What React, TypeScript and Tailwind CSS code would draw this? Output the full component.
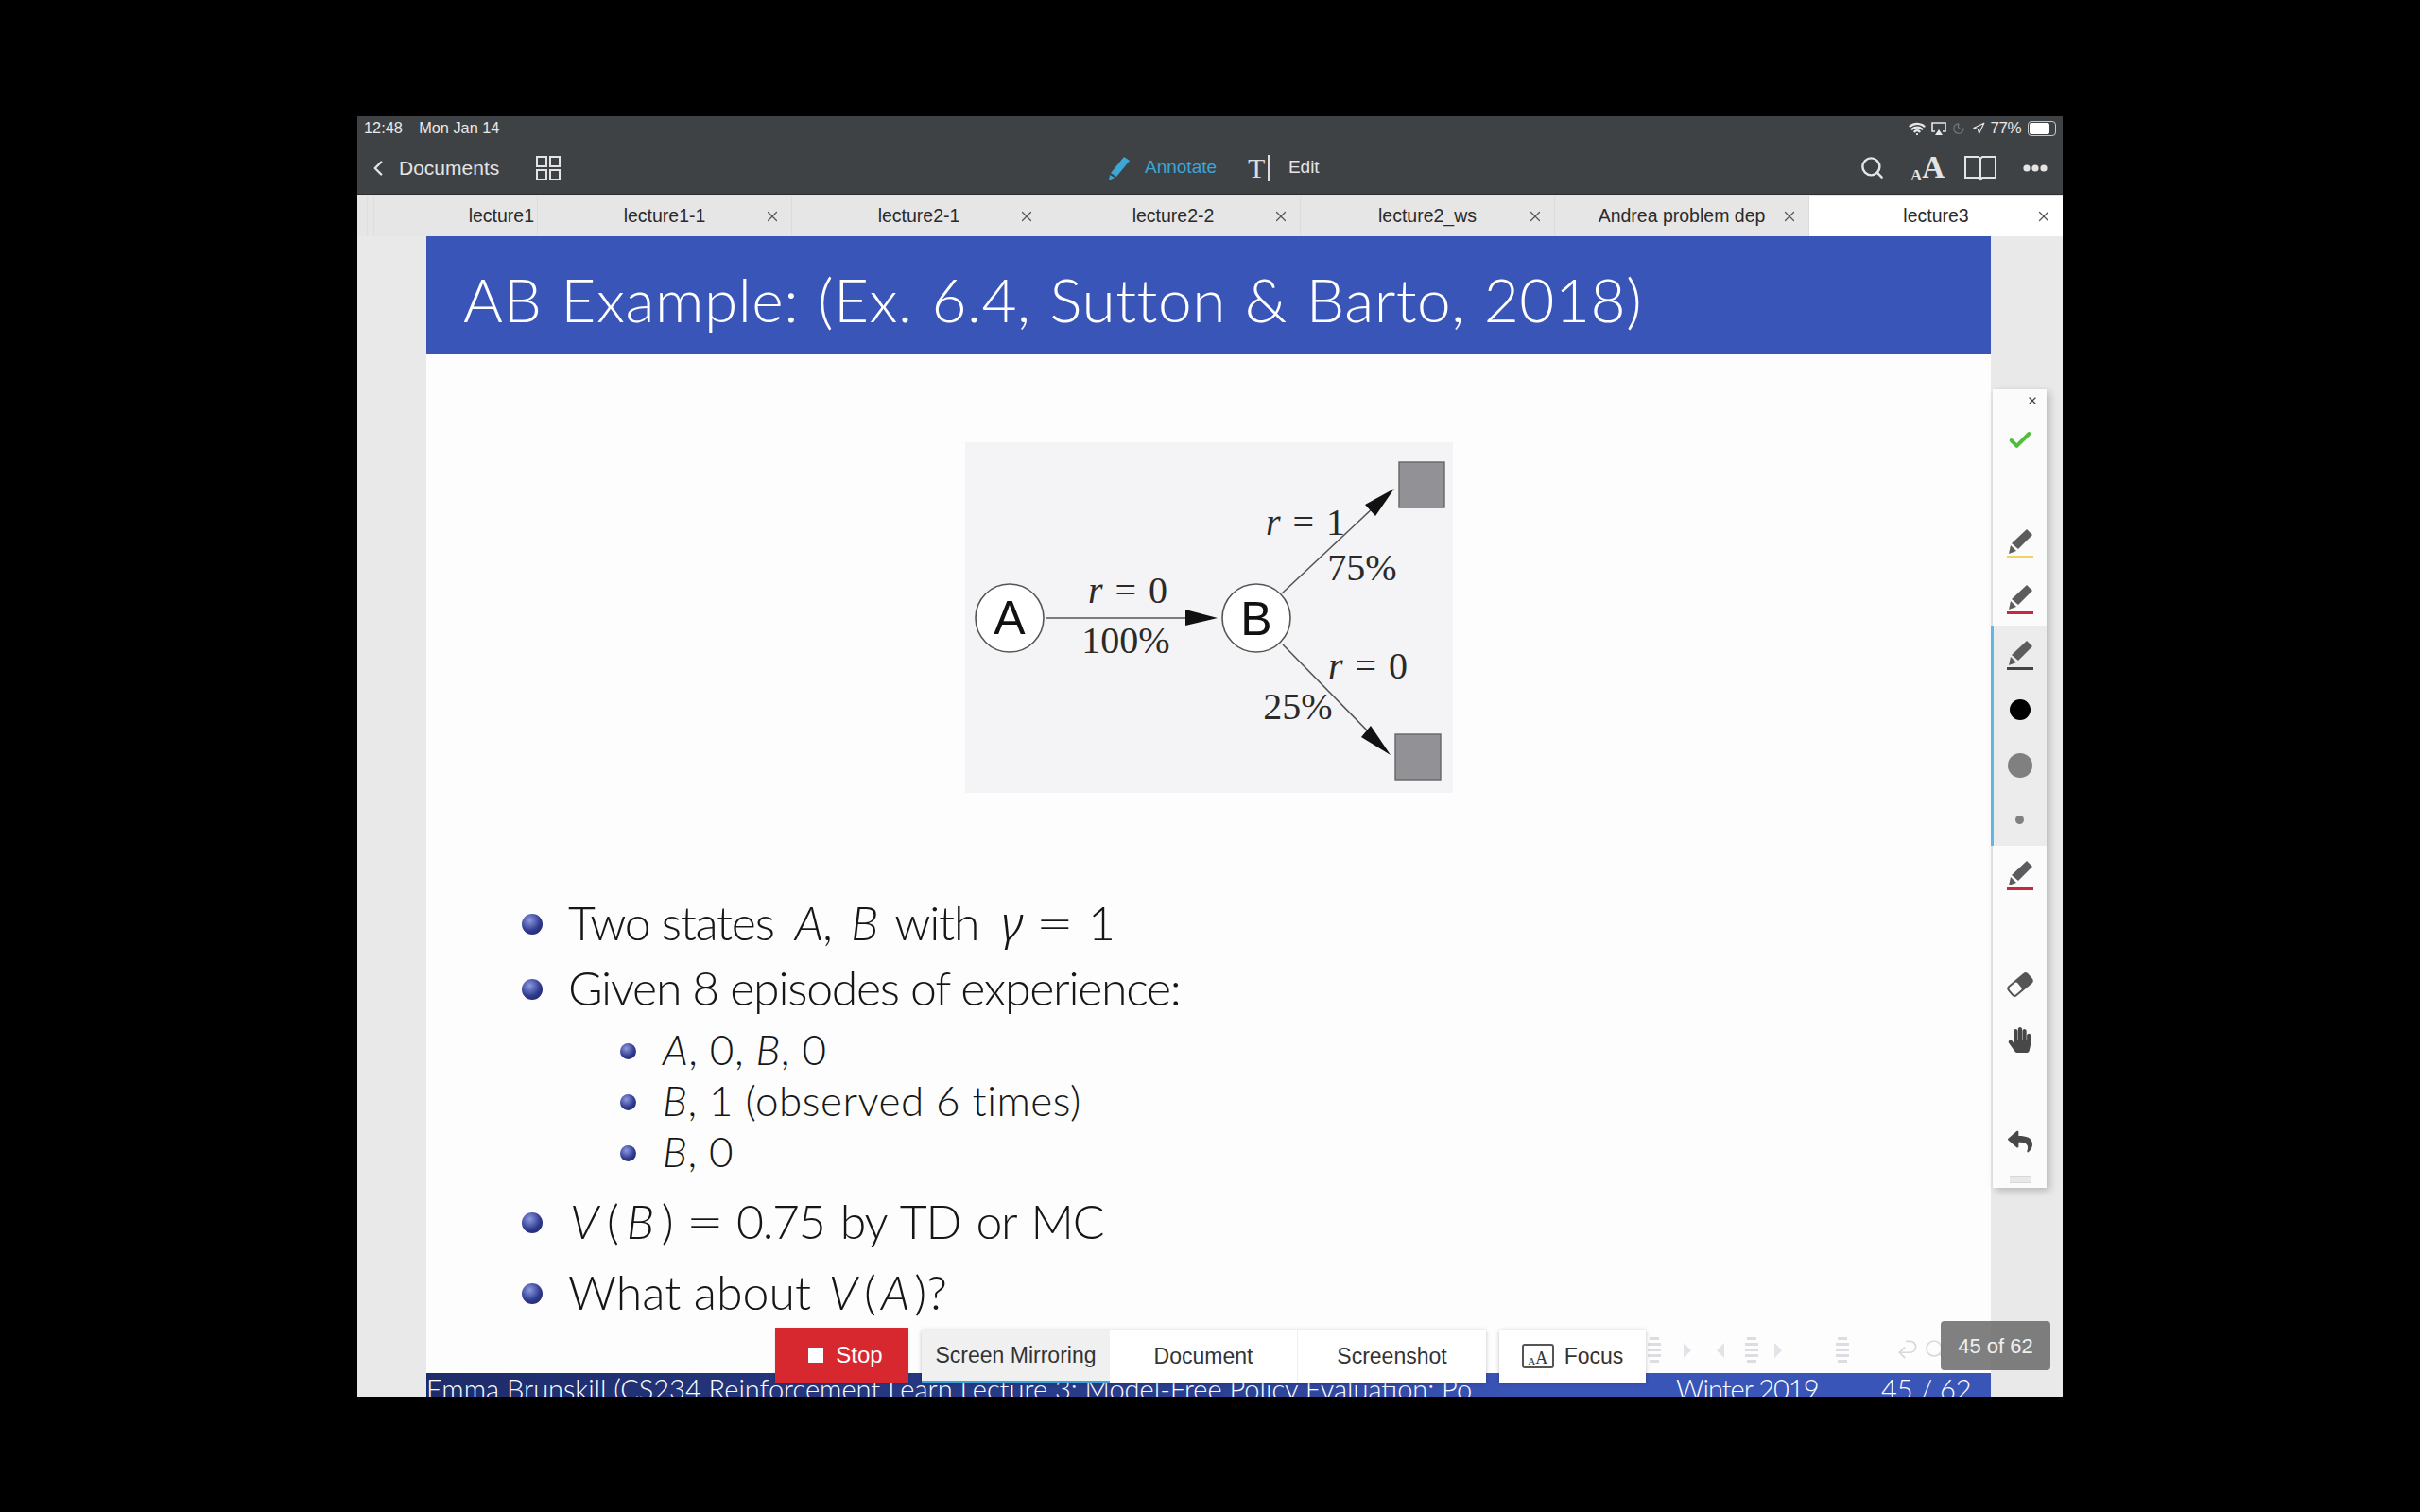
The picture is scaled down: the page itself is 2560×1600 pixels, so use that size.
import React from 'react';
import { ChevronLeft, Search, Check, X, Navigation, Moon, Wifi, Undo2 } from 'lucide-react';
import { FaHandPaper, FaReply } from 'react-icons/fa';

const tabs = ['lecture1-1', 'lecture2-1', 'lecture2-2', 'lecture2_ws', 'Andrea problem dep'];

const PenIcon = ({ line }: { line: string }) => (
  <svg width="30" height="32" viewBox="0 0 30 32">
    <path d="M22 0l6 6L13 21l-7-6z" fill="#5c5c5e" />
    <path d="M5 17l6 6-8 3z" fill="#5c5c5e" />
    <rect x="1" y="28" width="28" height="3" fill={line} />
  </svg>
);

const Ball = ({ small }: { small?: boolean }) => (
  <span
    className={`shrink-0 rounded-full bg-[radial-gradient(circle_at_38%_32%,#8d9ae0,#2f3a8e_55%,#181f5c)] ${
      small ? 'w-[17px] h-[17px] mt-[4px]' : 'w-[22px] h-[22px] mt-[3px]'
    }`}
  />
);

const NavMark = ({ x }: { x: string }) => (
  <svg width="14" height="32" viewBox="0 0 14 32" className={`absolute top-[1415px] ${x}`}>
    <g fill="#dcdce2">
      <rect x="2" y="0" width="10" height="3" />
      <rect x="0" y="6" width="14" height="3" />
      <rect x="0" y="12" width="14" height="3" />
      <rect x="0" y="18" width="14" height="3" />
      <rect x="2" y="24" width="10" height="3" />
    </g>
  </svg>
);

const NavArrow = ({ x, left }: { x: string; left?: boolean }) => (
  <svg width="8" height="16" viewBox="0 0 8 16" className={`absolute top-[1421px] ${x}`}>
    <path d={left ? 'M8 0v16L0 8z' : 'M0 0v16l8-8z'} fill="#e2e2e8" />
  </svg>
);

const Diagram = () => (
  <svg width="516" height="371" viewBox="1022 468 516 371" className="block bg-[#f4f4f6] mx-auto">
    <g stroke="#555" strokeWidth="1.6" fill="none">
      <line x1="1107" y1="654" x2="1260" y2="654" />
      <line x1="1357" y1="628" x2="1455" y2="536" />
      <line x1="1358" y1="682" x2="1452" y2="778" />
    </g>
    <path d="M1289 654l-34-9v17z" fill="#111" />
    <path d="M1476 517l-31 17 11 12z" fill="#111" />
    <path d="M1472 799l-21-31-10 12z" fill="#111" />
    <circle cx="1069" cy="654" r="36" fill="#fff" stroke="#555" strokeWidth="1.6" />
    <circle cx="1330" cy="654" r="36" fill="#fff" stroke="#555" strokeWidth="1.6" />
    <rect x="1481" y="489" width="48" height="48" fill="#929296" stroke="#666" strokeWidth="1.4" />
    <rect x="1477" y="777" width="48" height="48" fill="#929296" stroke="#666" strokeWidth="1.4" />
    <g fontFamily="'Liberation Sans', sans-serif" fontSize="50" fill="#111" textAnchor="middle">
      <text x="1069" y="671">A</text>
      <text x="1330" y="672">B</text>
    </g>
    <g fontFamily="'Liberation Serif', serif" fontSize="40" fill="#2a2a2a" textAnchor="middle" wordSpacing="3">
      <text x="1194" y="638"><tspan fontStyle="italic">r</tspan> = 0</text>
      <text x="1192" y="691">100%</text>
      <text x="1382" y="566"><tspan fontStyle="italic">r</tspan> = 1</text>
      <text x="1442" y="614">75%</text>
      <text x="1448" y="718"><tspan fontStyle="italic">r</tspan> = 0</text>
      <text x="1374" y="761">25%</text>
    </g>
  </svg>
);

const App = () => {
  return (
    <div className="relative w-[2560px] h-[1600px] bg-black overflow-hidden pt-[123px] pl-[378px] font-['Liberation_Sans',sans-serif]">
      <div className="w-[1804px] h-[1355px] flex flex-col bg-[#e9e9e9] overflow-hidden">
        {/* Status bar */}
        <div className="h-[25px] bg-[#3f4244] flex items-center justify-between pl-[7px] pr-[7px] text-[#e8e8e8] text-[17px] shrink-0">
          <div className="flex gap-[18px] scale-x-[0.96] origin-left">
            <span>12:48</span>
            <span>Mon Jan 14</span>
          </div>
          <div className="flex items-center gap-[5px]">
            <Wifi size={18} strokeWidth={3} />
            <svg width="18" height="18" viewBox="0 0 18 18" fill="none" stroke="#e8e8e8" strokeWidth="1.6">
              <path d="M5 12H2V3h14v9h-3" />
              <path d="M9 10l4 6H5z" fill="#e8e8e8" stroke="none" />
            </svg>
            <Moon size={14} className="text-[#77797b]" />
            <Navigation size={14} className="ml-[2px]" />
            <span className="tracking-[-0.5px]">77%</span>
            <div className="w-[30px] h-[16px] border border-[#c8c8c8] rounded-[4px] p-[1px] ml-[2px]">
              <div className="w-[21px] h-full bg-white rounded-[2px]" />
            </div>
          </div>
        </div>

        {/* Toolbar */}
        <div className="h-[58px] pt-[2px] bg-[#3f4244] border-b border-[#2c2e30] flex items-center text-[#e4e4e4] shrink-0">
          <div className="w-[794px] flex items-center">
            <ChevronLeft size={26} strokeWidth={2.2} className="ml-[9px]" />
            <span className="ml-[9px] text-[21px]">Documents</span>
            <svg width="26" height="26" viewBox="0 0 26 26" fill="none" stroke="#e4e4e4" strokeWidth="2" className="ml-[39px]">
              <rect x="1" y="1" width="10" height="10" />
              <rect x="15" y="1" width="10" height="10" />
              <rect x="1" y="15" width="10" height="10" />
              <rect x="15" y="15" width="10" height="10" />
            </svg>
          </div>
          <svg width="24" height="26" viewBox="0 0 24 26" fill="#3ca6d8">
            <path d="M17 1l6 4L9 22l-6-4z" />
            <path d="M2 20l5 3-6 3z" />
          </svg>
          <span className="ml-[15px] text-[19px] text-[#3ca6d8]">Annotate</span>
          <span className="ml-[33px] flex items-center font-['Liberation_Serif',serif] text-[30px] text-[#dcdcdc] font-normal leading-none">
            T<span className="w-[1.5px] h-[28px] bg-[#dcdcdc] ml-[3px]" />
          </span>
          <span className="ml-[20px] text-[19px]">Edit</span>
          <div className="ml-auto flex items-center pr-[16px]">
            <Search size={27} strokeWidth={2.2} />
            <span className="ml-[27px] font-['Liberation_Serif',serif] font-bold leading-none flex items-end">
              <span className="text-[17px]">A</span>
              <span className="text-[33px]">A</span>
            </span>
            <svg width="36" height="28" viewBox="0 0 36 28" fill="none" stroke="#e4e4e4" strokeWidth="2" className="ml-[20px]">
              <path d="M2 2h14l2 2 2-2h14v22H20l-2 2-2-2H2zM18 4v22" />
            </svg>
            <svg width="26" height="8" viewBox="0 0 26 8" fill="#e4e4e4" className="ml-[27px]">
              <circle cx="4" cy="4" r="3.6" />
              <circle cx="13" cy="4" r="3.6" />
              <circle cx="22" cy="4" r="3.6" />
            </svg>
          </div>
        </div>

        {/* Tabs */}
        <div className="h-[44px] pt-[1px] flex bg-[#e6e6e6] text-[#2b2b2b] text-[19.5px] shrink-0">
          <div className="relative w-[191px] h-full flex items-center justify-end pr-[3px] border-r border-[#dcdcdc]">
            <span className="absolute left-[10px] top-0 bottom-0 w-[8px] border-x border-[#dedede]" />
            <span>lecture1</span>
          </div>
          {tabs.map(t => (
            <div key={t} className="relative w-[269px] h-full flex items-center justify-center border-r border-[#dcdcdc]">
              <span>{t}</span>
              <X size={18} strokeWidth={1.6} className="absolute right-[11px] text-[#555]" />
            </div>
          ))}
          <div className="relative flex-1 h-full flex items-center justify-center bg-white">
            <span>lecture3</span>
            <X size={18} strokeWidth={1.6} className="absolute right-[11px] text-[#555]" />
          </div>
        </div>

        {/* Slide */}
        <div className="ml-[73px] w-[1655px] flex-1 flex flex-col bg-[#fdfdfd] overflow-hidden font-['Lato',sans-serif] text-[#161616]">
          <div className="h-[125px] bg-[#3a55b8] flex items-center pl-[39px] pt-[8px] text-white text-[64px] font-light tracking-[0.5px] [word-spacing:2px] shrink-0">
            AB Example: (Ex. 6.4, Sutton &amp; Barto, 2018)
          </div>
          <div className="flex-1 flex flex-col">
            <div className="mt-[93px]">
              <Diagram />
            </div>
            <div className="mt-[107px] pl-[101px] text-[50px] font-light tracking-[-1.3px]">
              <div className="h-[60px] flex items-center">
                <Ball />
                <span className="ml-[27px]">
                  Two states <i className="ml-[10px]">A</i>, <i className="ml-[8px]">B</i> <span className="ml-[6px]">with</span>{' '}
                  <span className="ml-[12px] font-['Noto_Sans',sans-serif] italic">γ</span>
                  <span className="inline-block scale-x-[1.4] ml-[20px] mr-[22px]">=</span>1
                </span>
              </div>
              <div className="mt-[9px] h-[60px] flex items-center">
                <Ball />
                <span className="ml-[27px]">Given 8 episodes of experience:</span>
              </div>
              <div className="mt-[8px] pl-[104px] text-[44px] tracking-[0.5px]">
                <div className="h-[54px] flex items-center">
                  <Ball small />
                  <span className="ml-[28px]"><i>A</i>, 0, <i>B</i>, 0</span>
                </div>
                <div className="h-[54px] flex items-center">
                  <Ball small />
                  <span className="ml-[28px]"><i>B</i>, 1 (observed 6 times)</span>
                </div>
                <div className="h-[54px] flex items-center">
                  <Ball small />
                  <span className="ml-[28px]"><i>B</i>, 0</span>
                </div>
              </div>
              <div className="mt-[17px] h-[60px] flex items-center">
                <Ball />
                <span className="ml-[27px] [word-spacing:4px]">
                  <i className="ml-[2px] mr-[10px]">V</i>(<i className="mx-[9px]">B</i>)
                  <span className="inline-block scale-x-[1.4] ml-[20px] mr-[20px]">=</span>0.75 by TD or MC
                </span>
              </div>
              <div className="mt-[15px] h-[60px] flex items-center">
                <Ball />
                <span className="ml-[27px] tracking-[0px]">
                  What about <i className="ml-[5px] mr-[7px]">V</i>(<i className="mx-[5px]">A</i>)?
                </span>
              </div>
            </div>
          </div>
          <div className="h-[25px] flex items-start overflow-hidden bg-[linear-gradient(90deg,#1e2c6a,#2a3f90_50%,#3a55b8_70%)] text-white text-[29px] font-light leading-[34px] whitespace-nowrap shrink-0">
            <span className="w-[1322px] overflow-hidden">Emma Brunskill (CS234 Reinforcement Learn Lecture 3: Model-Free Policy Evaluation: Po</span>
            <span className="w-[217px] tracking-[-1px]">Winter 2019</span>
            <span>45 / 62</span>
          </div>
        </div>
      </div>

      {/* Faint slide nav behind the overlays */}
      <NavMark x="left-[1743px]" />
      <NavArrow x="left-[1781px]" />
      <NavArrow x="left-[1816px]" left />
      <NavMark x="left-[1846px]" />
      <NavArrow x="left-[1877px]" />
      <NavMark x="left-[1942px]" />
      <Undo2 size={26} strokeWidth={1.6} className="absolute left-[2005px] top-[1415px] text-[#d8d8d8] -scale-y-100" />
      <Search size={24} strokeWidth={1.6} className="absolute left-[2035px] top-[1416px] text-[#d8d8d8]" />

      {/* Mirroring bar */}
      <div className="absolute left-[820px] top-[1405px] w-[141px] h-[58px] pl-[8px] bg-[#d7282f] text-white text-[24px] flex items-center justify-center gap-[13px] shadow">
        <span className="w-[16px] h-[16px] bg-white" />
        Stop
      </div>
      <div className="absolute left-[975px] top-[1407px] h-[56px] flex bg-white text-[#333] text-[23px] shadow-[0_1px_4px_rgba(0,0,0,0.25)]">
        <div className="w-[199px] flex items-center justify-center bg-[#f0f0f0] border-b-2 border-[#3ca6d8]">Screen Mirroring</div>
        <div className="w-[199px] flex items-center justify-center border-r border-[#eeeeee]">Document</div>
        <div className="w-[199px] flex items-center justify-center">Screenshot</div>
      </div>
      <div className="absolute left-[1586px] top-[1407px] w-[155px] h-[56px] bg-white text-[#333] text-[23px] flex items-center justify-center gap-[11px] shadow-[0_1px_4px_rgba(0,0,0,0.25)]">
        <span className="w-[34px] h-[26px] border-2 border-[#555] rounded-[3px] flex items-end justify-center font-['Liberation_Serif',serif] leading-none">
          <span className="text-[11px]">A</span>
          <span className="text-[18px]">A</span>
        </span>
        Focus
      </div>
      <div className="absolute left-[2053px] top-[1398px] w-[116px] h-[52px] bg-[#6a6a6a]/85 rounded-[4px] text-[#f0f0f0] text-[22px] flex items-center justify-center">
        45 of 62
      </div>

      {/* Annotation panel */}
      <div className="absolute left-[2108px] top-[412px] w-[57px] h-[845px] bg-[#fbfbfb] shadow-[3px_3px_8px_rgba(0,0,0,0.22)] flex flex-col items-center">
        <div className="w-full h-[24px] flex items-center justify-end pr-[9px]">
          <X size={12} strokeWidth={2.4} className="text-[#444]" />
        </div>
        <Check size={28} strokeWidth={3.4} className="mt-[16px] text-[#4fbf3a]" />
        <div className="mt-[80px]"><PenIcon line="#f4d266" /></div>
        <div className="mt-[27px]"><PenIcon line="#c8283f" /></div>
        <div className="relative mt-[11px] w-full h-[233px] bg-[#ececec] flex flex-col items-center before:absolute before:left-[-2px] before:top-0 before:bottom-0 before:w-[3px] before:bg-[#5fb9df]">
          <div className="mt-[16px]"><PenIcon line="#444" /></div>
          <span className="mt-[30px] w-[22px] h-[22px] rounded-full bg-black" />
          <span className="mt-[35px] w-[26px] h-[26px] rounded-full bg-[#808080]" />
          <span className="mt-[40px] w-[9px] h-[9px] rounded-full bg-[#808080]" />
        </div>
        <div className="mt-[16px]"><PenIcon line="#c8283f" /></div>
        <svg width="30" height="30" viewBox="0 0 30 30" className="mt-[84px]">
          <g transform="rotate(-40 15 15)">
            <rect x="1" y="8" width="28" height="14" rx="4" fill="#555" />
            <rect x="3" y="10" width="11" height="10" rx="2" fill="#fbfbfb" />
          </g>
        </svg>
        <FaHandPaper size={27} className="mt-[30px] text-[#484848]" />
        <FaReply size={26} className="mt-[81px] text-[#484848]" />
        <div className="mt-[23px] w-[22px] h-[8px] border-y border-[#d8d8d8] bg-[#e8e8e8]" />
      </div>
    </div>
  );
};

export default App;
